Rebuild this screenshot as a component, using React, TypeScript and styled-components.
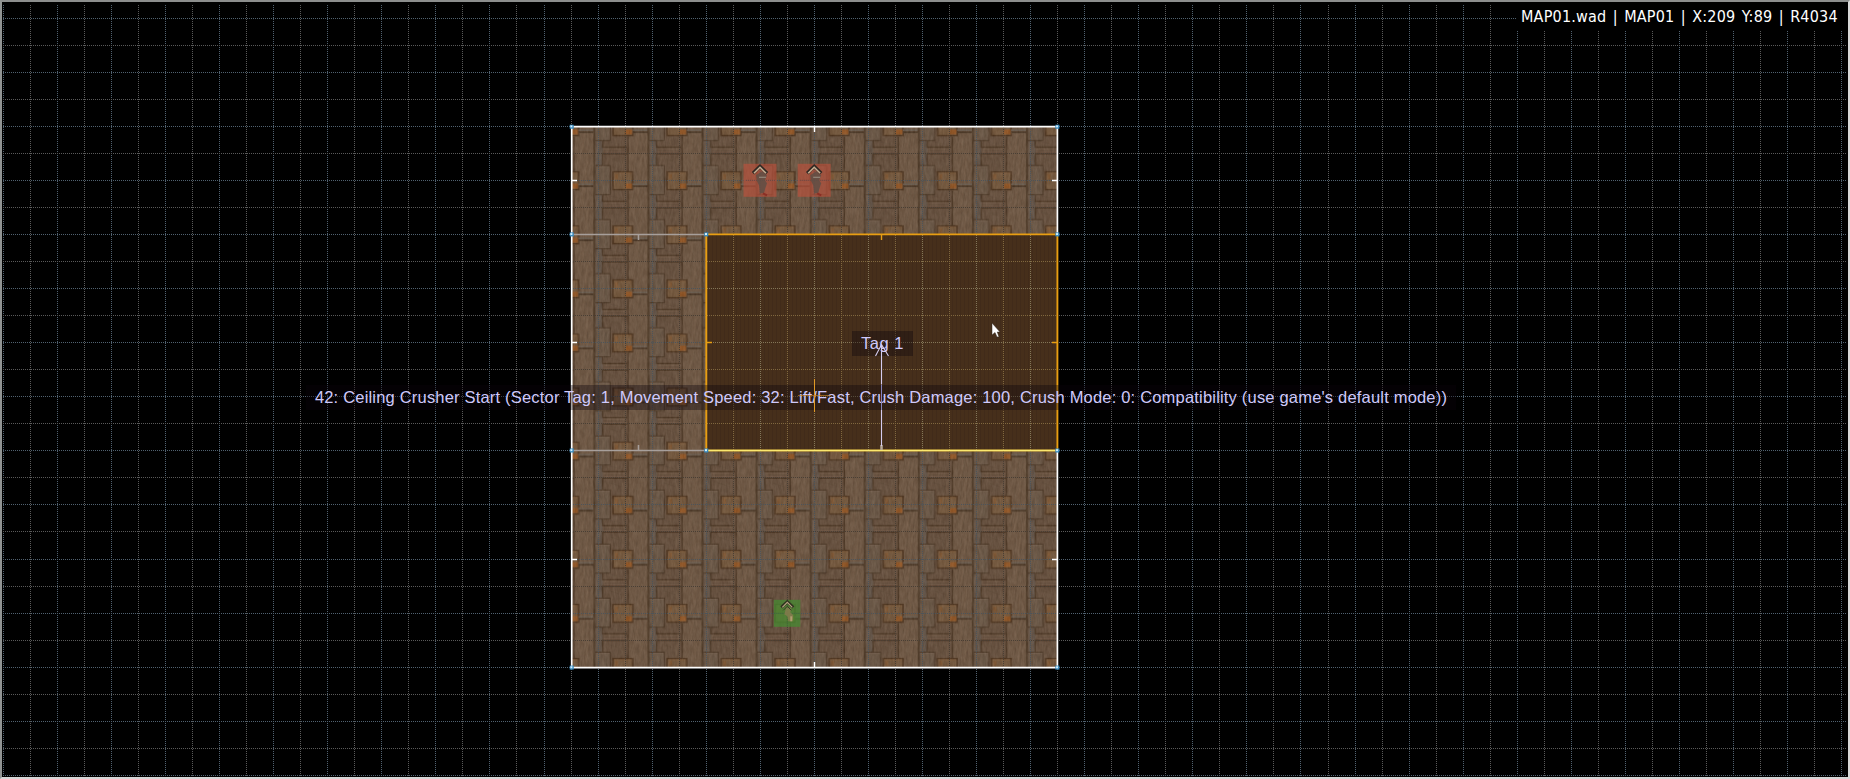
import React from "react";
import styled, { createGlobalStyle } from "styled-components";

const GlobalStyle = createGlobalStyle`
  html, body, #root { margin: 0; height: 100%; background: #000; overflow: hidden; }
`;

const PITCH = 27.035;
const ORIGIN = { x: 3.3, y: 18.3 };
const SIZE = { w: 1850, h: 779 };

const Viewport = styled.main`
  position: relative;
  box-sizing: border-box;
  width: 1850px;
  height: 779px;
  background: #000;
  overflow: hidden;
`;

const MapDrawing = styled.svg`
  display: block;
  width: 100%;
  height: 100%;
`;

const OverlayDrawing = styled.svg`
  position: absolute;
  inset: 0;
  width: 100%;
  height: 100%;
  pointer-events: none;
`;

const WindowFrame = styled.div`
  position: absolute;
  inset: 0;
  border-style: solid;
  border-width: 2px;
  border-color: #8c8e8d #d8d8d8 #d8d8d8 #929594;
  pointer-events: none;
`;

const StatusText = styled.header`
  position: absolute;
  top: 4px;
  right: 3px;
  box-sizing: border-box;
  width: 330px;
  height: 26px;
  padding: 0 0 0 4px;
  background: #000;
  color: #fff;
  font: 16px/26px "DejaVu Sans Condensed", "DejaVu Sans", sans-serif;
  font-stretch: condensed;
  white-space: pre;
  letter-spacing: 0.2px;
  word-spacing: 1.6px;
`;

const MapLabel = styled.div<{ $x: number; $y: number; $w: number; $spacing: number }>`
  position: absolute;
  left: ${(p) => p.$x}px;
  top: ${(p) => p.$y}px;
  width: ${(p) => p.$w}px;
  height: 25px;
  box-sizing: border-box;
  padding-bottom: 1px;
  display: flex;
  align-items: center;
  justify-content: center;
  background: rgba(10, 4, 12, 0.36);
  color: #cfc9fb;
  font: 16.5px/1 "Liberation Sans", Arial, sans-serif;
  letter-spacing: ${(p) => p.$spacing}px;
  white-space: pre;
`;

const Pointer = styled.svg`
  position: absolute;
  left: 991px;
  top: 322px;
  width: 11px;
  height: 17px;
`;

const X = { left: 571.7, inner: 706.3, right: 1057.4 };
const Y = { top: 126.7, upper: 234.4, lower: 450.5, bottom: 667.6 };

function FloorTile() {
  return (
    <pattern
      id="floor"
      width="162"
      height="162"
      patternUnits="userSpaceOnUse"
      patternTransform="translate(593.3 480) scale(0.3338)"
    >
      <rect width="162" height="162" fill="#665140" />
      <rect x="106" width="56" height="162" fill="#6f5946" />
      <rect x="8" width="20" height="162" fill="#64574c" />
      <rect x="0" width="6" height="162" fill="#523f2d" />
      <path d="M28 0V30M28 117V137H100M28 194V157H104M28 157V162M104 105V162M104 0V48" stroke="#4d3927" strokeWidth="4.5" fill="none" />
      <path d="M32 142H100M32 152H100" stroke="#725c49" strokeWidth="2" />
      <rect x="5" y="30" width="46" height="87" fill="#6a5848" stroke="#4f3c2b" strokeWidth="3.5" />
      <path d="M8 34H48" stroke="#746150" strokeWidth="2" />
      <rect x="59" y="49" width="59" height="53" fill="#74593f" stroke="#4f3722" strokeWidth="4.5" />
      <path d="M62 53H114" stroke="#7e5c3d" strokeWidth="3" />
      <path d="M98 84H116V99H94Z" fill="#925727" />
      <path d="M64 56h10v14h-10z" fill="#7e5836" />
      <path d="M118 92H162" stroke="#4b3929" strokeWidth="5.5" />
      <path d="M118 86H162" stroke="#695e54" strokeWidth="4" />
      <path d="M124 98L118 138M142 100L134 160M154 98L148 150M133 4L126 70M150 4L144 78M16 8V28M20 122V160M39 42V108M19 44V108M48 8L84 20M44 120L80 128M60 10V36M76 8V38" stroke="#584634" strokeWidth="2" opacity=".5" />
      <path d="M136 98L128 150M146 2L139 60M12 120V160M30 40V110M68 110V130M88 8V40" stroke="#806750" strokeWidth="2" opacity=".5" />
    </pattern>
  );
}

function GridLines({ overlay }: { overlay?: "floor" | "tag" }) {
  const cols = Array.from({ length: 69 }, (_, i) => i);
  const rows = Array.from({ length: 29 }, (_, i) => i);
  const tone = (i: number) => {
    if (overlay === "floor") return i % 2 ? "#493f35" : "#4b545b";
    if (overlay === "tag") return i % 2 ? "#80683f" : "#837658";
    return i % 2 ? "#5a5a5a" : "#516270";
  };
  return (
    <g strokeWidth="1" strokeDasharray="1 1" shapeRendering="crispEdges">
      {cols.map((i) => {
        const x = Math.floor(ORIGIN.x + i * PITCH) + 0.5;
        return <path key={`c${i}`} d={`M${x} 5V776`} stroke={tone(i)} />;
      })}
      {rows.map((i) => {
        const y = Math.floor(ORIGIN.y + i * PITCH) + 0.5;
        return <path key={`r${i}`} d={`M3 ${y}H1846`} stroke={tone(i)} />;
      })}
    </g>
  );
}

function Imp({ x, y }: { x: number; y: number }) {
  return (
    <g transform={`translate(${x} ${y})`}>
      <rect x="-16.5" y="-16.5" width="33" height="33" fill="#c0513c" opacity=".62" />
      <path d="M-14 0H15M0-15V15" stroke="#6a4840" strokeDasharray="1 1" />
      <path d="M-4-5L2-9 7-5 5 0 7 3 5 9 4 13H0L-1 5-3 1Z" fill="#5f4f45" opacity=".85" />
      <path d="M-1-3H6" stroke="#94877a" strokeWidth="1.2" />
      <path d="M3 13L7 15" stroke="#8b2f25" strokeWidth="2" />
      <path d="M-7-7L0-14 7-7" fill="none" stroke="#2d2722" strokeWidth="3.4" />
      <path d="M-6-7L0-13 6-7" fill="none" stroke="#c6ad91" strokeWidth="1.6" />
    </g>
  );
}

function PlayerStart({ x, y }: { x: number; y: number }) {
  return (
    <g transform={`translate(${x} ${y})`}>
      <rect x="-13.5" y="-13.5" width="26.5" height="27" fill="#458a32" opacity=".75" />
      <path d="M-13 0H13M0-12V13" stroke="#41603a" strokeDasharray="1 1" />
      <path d="M-1-6L4-5 3-1 6 2 5 8H1L0 3-3 1Z" fill="#827b4c" opacity=".9" />
      <path d="M4 3V8" stroke="#b39d71" strokeWidth="2" />
      <path d="M-6-6L0-11.5 6-6" fill="none" stroke="#2f3020" strokeWidth="3" />
      <path d="M-5-6L0-11 5-6" fill="none" stroke="#b6a47f" strokeWidth="1.2" />
      <path d="M-4-3L0-7 4-3" fill="none" stroke="#3c3a28" strokeWidth="1" />
    </g>
  );
}

function Vertex({ x, y }: { x: number; y: number }) {
  return (
    <g transform={`translate(${x} ${y})`}>
      <rect x="-2" y="-2" width="4" height="4" fill="#3387bc" />
      <rect x="-1.3" y="-1.3" width="2" height="2" fill="#d5f1ff" />
    </g>
  );
}

export default function App() {
  const vertices: [number, number][] = [
    [X.left, Y.top], [X.right, Y.top],
    [X.left, Y.upper], [X.inner, Y.upper], [X.right, Y.upper],
    [X.left, Y.lower], [X.inner, Y.lower], [X.right, Y.lower],
    [X.left, Y.bottom], [X.right, Y.bottom],
  ];
  return (
    <>
      <GlobalStyle />
      <Viewport>
        <MapDrawing viewBox={`0 0 ${SIZE.w} ${SIZE.h}`}>
          <defs>
            <FloorTile />
            <pattern id="scan" width="4" height="2" patternUnits="userSpaceOnUse">
              <rect width="4" height="2" fill="#462f1b" />
              <rect width="1" height="2" fill="#412b1a" />
            </pattern>
            <filter id="grain" x="0" y="0" width="1" height="1" colorInterpolationFilters="sRGB">
              <feTurbulence type="fractalNoise" baseFrequency="0.45 0.13" numOctaves="3" seed="7" />
              <feColorMatrix values="1.2 0 0 0 -0.15  1.2 0 0 0 -0.25  1.2 0 0 0 -0.33  0 0 0 0 0.08" />
            </filter>
            <clipPath id="sectors">
              <rect x={X.left} y={Y.top} width={X.right - X.left} height={Y.bottom - Y.top} />
            </clipPath>
            <clipPath id="tagged">
              <rect x={X.inner} y={Y.upper} width={X.right - X.inner} height={Y.lower - Y.upper} />
            </clipPath>
          </defs>
          <GridLines />
          <g clipPath="url(#sectors)">
            <rect x="571" y="126" width="487" height="542" fill="url(#floor)" />
            <rect x="571" y="126" width="487" height="542" filter="url(#grain)" />
            <GridLines overlay="floor" />
          </g>
          <g clipPath="url(#tagged)">
            <rect x="706" y="234" width="352" height="217" fill="url(#scan)" />
            <GridLines overlay="tag" />
          </g>
          <Imp x={760} y={180.3} />
          <Imp x={814.2} y={180.3} />
          <PlayerStart x={787.3} y={613.3} />
          <g fill="none" stroke="#a79f9b" strokeWidth="1.5">
            <path d={`M${X.left} ${Y.upper}H${X.inner}M638.5 ${Y.upper}v5.5`} />
            <path d={`M${X.left} ${Y.lower}H${X.inner}M638.5 ${Y.lower}v-5.5`} />
          </g>
          <g fill="none" stroke="#fff" strokeWidth="1.7">
            <path d={`M${X.right} ${Y.upper}V${Y.top}H${X.left}V${Y.bottom}H${X.right}V${Y.lower}`} />
            <path d="M814.5 127v5M814.5 667v-5M572 180.5h5M572 342.5h5M572 559.5h5M1057 180.5h-5M1057 559.5h-5" strokeWidth="1.4" />
          </g>
          <g fill="none" stroke="#e89e12" strokeWidth="1.9">
            <path d={`M${X.inner} ${Y.lower}V${Y.upper}H${X.right}V${Y.lower}`} />
            <path d="M881.5 235v5M707 342.5h5M1057 342.5h-5" strokeWidth="1.4" />
          </g>
          <path d={`M${X.inner} ${Y.lower}H${X.right}`} stroke="#e7c243" strokeWidth="1.9" />
          <path d={`M${X.inner} ${Y.lower - 0.1}H${X.right}`} stroke="#fff17b" strokeWidth=".9" />
          <path d="M881.5 445v5" stroke="#b7a999" strokeWidth="2.5" />
          {vertices.map(([x, y]) => (
            <Vertex key={`${x}-${y}`} x={x} y={y} />
          ))}
        </MapDrawing>
        <MapLabel $x={852} $y={331} $w={61} $spacing={0.5}>Tag 1</MapLabel>
        <MapLabel $x={306} $y={385} $w={1150} $spacing={0.19}>
          42: Ceiling Crusher Start (Sector Tag: 1, Movement Speed: 32: Lift/Fast, Crush Damage: 100, Crush Mode: 0: Compatibility (use game's default mode))
        </MapLabel>
        <OverlayDrawing viewBox={`0 0 ${SIZE.w} ${SIZE.h}`}>
          <path d="M814.5 379v33" stroke="#e09a26" />
          <path d="M798 395.5h33" stroke="#c98422" opacity=".65" />
          <path d="M881.5 345V384.5M881.5 410V446M875.5 356L881.5 344.5L888.5 356" fill="none" stroke="#d5ccef" strokeWidth="1.1" />
          <path d="M881.5 385V410" stroke="#8783bd" strokeWidth="1" />
        </OverlayDrawing>
        <Pointer viewBox="0 0 11 17">
          <path d="M1 1V13L4 10.5L6 15H8L6.3 10H9Z" fill="#fff" stroke="#30251a" strokeWidth=".5" />
        </Pointer>
        <StatusText>MAP01.wad | MAP01 | X:209 Y:89 | R4034</StatusText>
        <WindowFrame />
      </Viewport>
    </>
  );
}
